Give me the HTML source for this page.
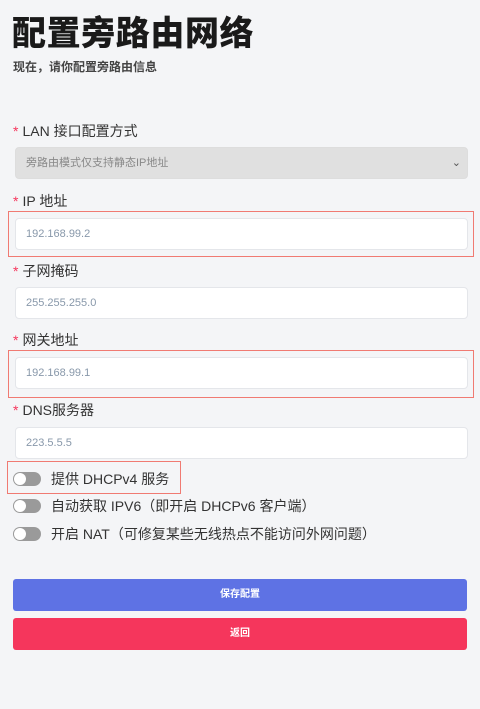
<!DOCTYPE html>
<html><head><meta charset="utf-8"><style>
*{margin:0;padding:0;box-sizing:border-box}
body{width:480px;height:709px;background:#f4f5f7;font-family:"Liberation Sans","Noto Sans CJK SC",sans-serif;position:relative;overflow:hidden;color:#32325d}
.a{position:absolute}
h1{position:absolute;left:12px;top:14px;font-size:34px;font-weight:900;color:#1a1a1a;letter-spacing:0.6px;line-height:40px}
.sub{left:13px;top:58px;font-size:12px;font-weight:bold;color:#444}
.lbl{left:13px;font-size:14px;color:#333;line-height:18px}
.lbl b{color:#f5365c;font-weight:normal;margin-right:4px}
.in{left:15px;width:453px;height:32px;background:#fff;border:1px solid #e4e6ea;border-radius:4px;font-size:11px;color:#8898aa;padding-left:10px;line-height:30px}
.red{border:1px solid #f07a72}
.tg{left:13px;width:28px;height:14px;border-radius:7px;background:#9a9a9a}
.tg::after{content:"";position:absolute;left:1px;top:1px;width:12px;height:12px;border-radius:50%;background:#fff}
.tl{left:51px;font-size:14px;color:#333;line-height:18px}
.btn{left:13px;width:454px;height:32px;border-radius:3px;color:#fff;font-size:10px;font-weight:bold;text-align:center;line-height:32px}
</style></head><body>
<h1>配置旁路由网络</h1>
<div class="a sub">现在，请你配置旁路由信息</div>
<div class="a lbl" style="top:122px"><b>*</b>LAN 接口配置方式</div>
<div class="a in" style="top:147px;background:#e0e0e0;border-color:#ddd;color:#888">旁路由模式仅支持静态IP地址<span style="position:absolute;right:6px;color:#555">⌄</span></div>
<div class="a lbl" style="top:192px"><b>*</b>IP 地址</div>
<div class="a red" style="left:8px;top:211px;width:466px;height:46px"></div>
<div class="a in" style="top:218px">192.168.99.2</div>
<div class="a lbl" style="top:262px"><b>*</b>子网掩码</div>
<div class="a in" style="top:287px">255.255.255.0</div>
<div class="a lbl" style="top:331px"><b>*</b>网关地址</div>
<div class="a red" style="left:8px;top:350px;width:466px;height:48px"></div>
<div class="a in" style="top:357px">192.168.99.1</div>
<div class="a lbl" style="top:401px"><b>*</b>DNS服务器</div>
<div class="a in" style="top:427px">223.5.5.5</div>
<div class="a red" style="left:7px;top:461px;width:174px;height:33px"></div>
<div class="a tg" style="top:472px"></div><div class="a tl" style="top:470px">提供 DHCPv4 服务</div>
<div class="a tg" style="top:499px"></div><div class="a tl" style="top:497px">自动获取 IPV6（即开启 DHCPv6 客户端）</div>
<div class="a tg" style="top:527px"></div><div class="a tl" style="top:525px">开启 NAT（可修复某些无线热点不能访问外网问题）</div>
<div class="a btn" style="top:579px;background:#5e72e4">保存配置</div>
<div class="a btn" style="top:618px;background:#f5365c">返回</div>
</body></html>
